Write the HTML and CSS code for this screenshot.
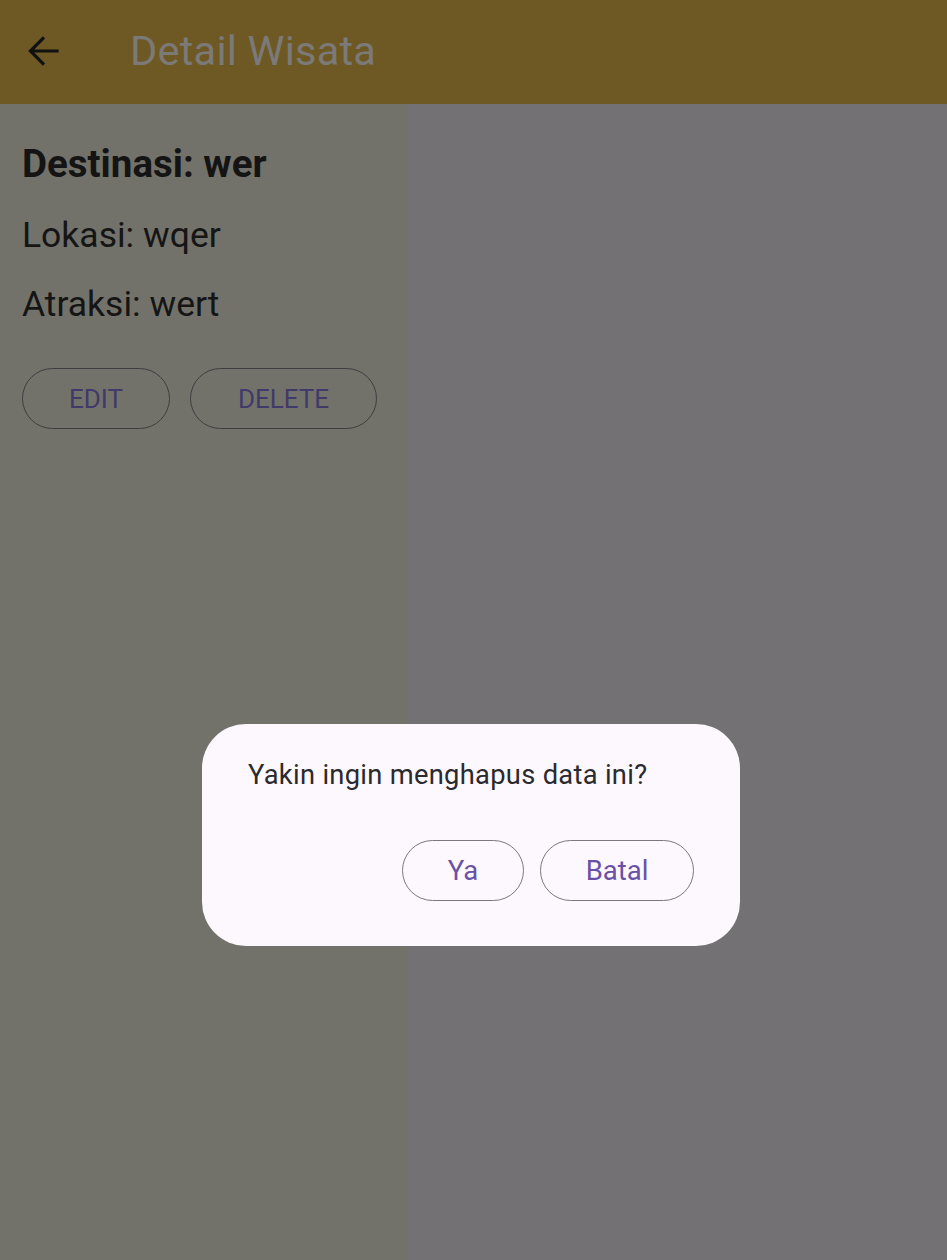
FILE: index.html
```html
<!DOCTYPE html>
<html lang="id">
<head>
<meta charset="utf-8">
<title>Detail Wisata</title>
<link rel="stylesheet" href="styles.css">
</head>
<body>
<div class="screen">
  <header class="appbar">
    <span class="back">
      <svg width="44" height="44" viewBox="0 0 24 24"><path d="M20 12H4.6M12 4.6L4.6 12l7.4 7.4" fill="none" stroke="#111" stroke-width="1.75"/></svg>
    </span>
    <h1 class="title">Detail Wisata</h1>
  </header>
  <div class="body">
    <section class="detail">
      <h2 class="dest">Destinasi: wer</h2>
      <p class="line">Lokasi: wqer</p>
      <p class="line">Atraksi: wert</p>
      <div class="actions">
        <button class="btn btn-edit">EDIT</button>
        <button class="btn btn-del">DELETE</button>
      </div>
    </section>
    <section class="rest"></section>
  </div>
  <div class="dialog">
    <p class="dialog-text">Yakin ingin menghapus data ini?</p>
    <div class="dialog-actions">
      <button class="dbtn dbtn-ya">Ya</button>
      <button class="dbtn dbtn-batal">Batal</button>
    </div>
  </div>
</div>
</body>
</html>
```
FILE: styles.css
```css
* { box-sizing: border-box; }
html, body { margin: 0; padding: 0; }
body {
  font-family: Roboto, "Noto Sans", sans-serif;
  width: 947px;
  height: 1260px;
  overflow: hidden;
}
.screen {
  position: relative;
  width: 947px;
  height: 1260px;
  display: flex;
  flex-direction: column;
}
.appbar {
  height: 104px;
  background: #6e5924;
  display: flex;
  align-items: center;
  padding: 0 0 3px 22px;
  flex-shrink: 0;
}
.back {
  width: 44px;
  height: 44px;
  display: flex;
}
.title {
  margin: 0 0 0 64px;
  font-weight: 400;
  font-size: 41.5px;
  letter-spacing: 0.25px;
  color: #7b7a78;
}
.body {
  flex: 1;
  display: flex;
}
.detail {
  width: 408px;
  flex-shrink: 0;
  background: #72726a;
  padding: 36px 0 0 22px;
}
.rest {
  flex: 1;
  background: #737174;
}
.dest {
  margin: 0;
  font-size: 38.5px;
  font-weight: 700;
  color: #141414;
  line-height: 48px;
}
.line {
  margin: 23px 0 0 0;
  font-size: 35.5px;
  color: #151515;
  line-height: 48px;
}
.line + .line { margin-top: 21px; }
.actions {
  display: flex;
  gap: 20px;
  margin-top: 40px;
}
.btn {
  height: 61px;
  border-radius: 31px;
  border: 1.5px solid #3f3d40;
  background: transparent;
  font-family: Roboto, sans-serif;
  font-size: 26px;
  color: #403a6a;
  padding: 0;
}
.btn-edit { width: 148px; }
.btn-del { width: 187px; }
.dialog {
  position: absolute;
  left: 202px;
  top: 724px;
  width: 538px;
  height: 222px;
  background: #fdf8fd;
  border-radius: 44px;
  padding: 34px 46px 0 46px;
}
.dialog-text {
  margin: 0;
  font-size: 27.3px;
  letter-spacing: 0.3px;
  line-height: 34px;
  color: #2a292e;
}
.dialog-actions {
  display: flex;
  justify-content: flex-end;
  gap: 16px;
  margin-top: 48px;
}
.dbtn {
  height: 61px;
  border-radius: 31px;
  border: 1.5px solid #7c787f;
  background: transparent;
  font-family: Roboto, sans-serif;
  font-size: 27.5px;
  color: #6952a6;
  padding: 0;
}
.dbtn-ya { width: 122px; }
.dbtn-batal { width: 154px; }
```
